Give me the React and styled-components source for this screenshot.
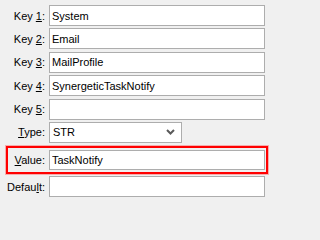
import React from "react";
import styled, { createGlobalStyle } from "styled-components";

const Global = createGlobalStyle`
  html, body {
    margin: 0;
    background: #f0f0f0;
  }
  body {
    font-family: "Liberation Sans", Arial, sans-serif;
    font-size: 11px;
    color: #000;
  }
`;

const Form = styled.div`
  box-sizing: border-box;
  width: 271px;
  display: flex;
  flex-direction: column;
  padding: 5px 6px 0 4px;
`;

const Row = styled.div`
  display: grid;
  grid-template-columns: ${(p) => (p.$highlight ? "37px" : "41px")} 1fr;
  column-gap: 4px;
  align-items: center;
  margin-bottom: ${(p) => (p.$highlight ? "2px" : "2.4px")};
  ${(p) =>
    p.$highlight &&
    `
    margin-left: 2px;
    margin-right: -3px;
    margin-top: 1px;
    padding: 2px 1px 2px 0;
    border: 2px solid #ff0000;
    box-shadow: 0 0 0 1px rgba(255, 90, 90, 0.45);
  `}
`;

const Label = styled.label`
  text-align: right;
  white-space: nowrap;
`;

const Key = styled.u`
  text-decoration: underline;
  text-underline-offset: 1px;
`;

const Field = styled.input`
  box-sizing: border-box;
  width: 100%;
  height: ${(p) => (p.$short ? "20px" : "21px")};
  margin: 0;
  padding: 0 2px;
  border: 1px solid #adadad;
  background: #fff;
  font-family: "Liberation Sans", Arial, sans-serif;
  font-size: 11px;
  color: #000;
  outline: none;
`;

const Select = styled.div`
  box-sizing: border-box;
  width: 133px;
  height: 21px;
  display: flex;
  align-items: center;
  justify-content: space-between;
  padding: 0 6px 0 3px;
  border: 1px solid #adadad;
  background: #fff;
`;

const Chevron = () => (
  <svg width="9" height="6" viewBox="0 0 9 6">
    <path d="M1 1 L4.5 4.5 L8 1" fill="none" stroke="#5a5a5a" strokeWidth="2" />
  </svg>
);

const keys = [
  ["1", "System"],
  ["2", "Email"],
  ["3", "MailProfile"],
  ["4", "SynergeticTaskNotify"],
  ["5", ""],
];

export default function App() {
  return (
    <>
      <Global />
      <Form>
        {keys.map(([n, v]) => (
          <Row key={n}>
            <Label>
              Key <Key>{n}</Key>:
            </Label>
            <Field defaultValue={v} />
          </Row>
        ))}
        <Row>
          <Label>
            <Key>T</Key>ype:
          </Label>
          <Select>
            <span>STR</span>
            <Chevron />
          </Select>
        </Row>
        <Row $highlight>
          <Label>
            <Key>V</Key>alue:
          </Label>
          <Field $short defaultValue="TaskNotify" />
        </Row>
        <Row>
          <Label>
            Defau<Key>l</Key>t:
          </Label>
          <Field />
        </Row>
      </Form>
    </>
  );
}
